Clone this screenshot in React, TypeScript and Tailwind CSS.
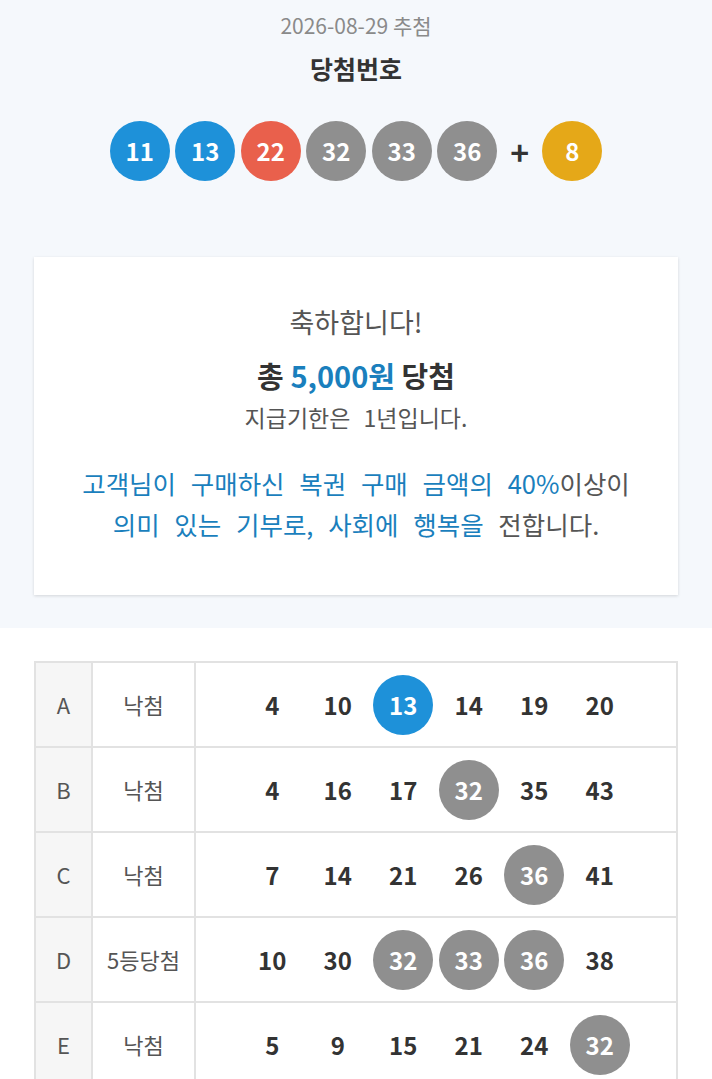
import React from "react";

const font = { fontFamily: '"Noto Sans CJK KR", "Noto Sans", sans-serif' };

const winning = [
  { n: 11, c: "bg-[#1e91d9]" },
  { n: 13, c: "bg-[#1e91d9]" },
  { n: 22, c: "bg-[#e9604c]" },
  { n: 32, c: "bg-[#8f8f8f]" },
  { n: 33, c: "bg-[#8f8f8f]" },
  { n: 36, c: "bg-[#8f8f8f]" },
];

const matchColor: Record<number, string> = {
  11: "bg-[#1e91d9]",
  13: "bg-[#1e91d9]",
  22: "bg-[#e9604c]",
  32: "bg-[#8f8f8f]",
  33: "bg-[#8f8f8f]",
  36: "bg-[#8f8f8f]",
};

const rows = [
  { key: "A", result: "낙첨", nums: [4, 10, 13, 14, 19, 20] },
  { key: "B", result: "낙첨", nums: [4, 16, 17, 32, 35, 43] },
  { key: "C", result: "낙첨", nums: [7, 14, 21, 26, 36, 41] },
  { key: "D", result: "5등당첨", nums: [10, 30, 32, 33, 36, 38] },
  { key: "E", result: "낙첨", nums: [5, 9, 15, 21, 24, 32] },
];

function Ball({ n, color }: { n: number; color: string }) {
  return (
    <div
      className={`flex h-[60px] w-[60px] items-center justify-center rounded-full text-[24px] font-bold text-white ${color}`}
    >
      {n}
    </div>
  );
}

export default function App() {
  return (
    <div className="min-h-[1079px] bg-white" style={font}>
      {/* Draw result */}
      <div className="bg-[#f5f8fc] px-[34px] pb-[33px] pt-[12px]">
        <p className="text-center text-[21px] leading-[26px] text-[#8a8a8a]">
          2026-08-29 추첨
        </p>
        <h1 className="mt-[15px] text-center text-[25px] font-bold leading-[30px] text-[#333]">
          당첨번호
        </h1>
        <div className="mt-[38px] flex items-center justify-center gap-[5.5px]">
          {winning.map((b) => (
            <Ball key={b.n} n={b.n} color={b.c} />
          ))}
          <span className="mx-[6px] w-[22px] text-center text-[32px] font-bold leading-none text-[#333]">
            +
          </span>
          <Ball n={8} color="bg-[#e5a818]" />
        </div>

        {/* Result card */}
        <div className="mt-[76px] bg-white pb-[51px] pt-[49px] text-center shadow-[0_1px_3px_rgba(0,0,0,0.14)]">
          <p className="text-[27px] leading-[32px] text-[#555]">축하합니다!</p>
          <p className="mt-[20px] text-[29px] font-bold leading-[34px] text-[#333]">
            총 <span className="text-[#1a7fbd]">5,000원</span> 당첨
          </p>
          <p className="mt-[11px] text-[23px] leading-[28px] text-[#555] [word-spacing:8px]">
            지급기한은 1년입니다.
          </p>
          <p className="mt-[31px] text-[25.5px] leading-[41px] text-[#1a7fbd] [word-spacing:9px]">
            고객님이 구매하신 복권 구매 금액의 40%<span className="text-[#555]">이상이</span>
            <br />
            의미 있는 기부로, 사회에 행복을 <span className="text-[#555]">전합니다.</span>
          </p>
        </div>
      </div>

      {/* My tickets */}
      <div className="px-[34px] pt-[33px]">
        <div className="border-l-2 border-r-2 border-t-2 border-[#e2e2e2]">
          {rows.map((r) => (
            <div key={r.key} className="flex h-[85px] border-b-2 border-[#e2e2e2]">
              <div className="flex w-[57px] items-center justify-center border-r-2 border-[#e2e2e2] bg-[#f6f6f6] text-[22px] text-[#555]">
                {r.key}
              </div>
              <div className="flex w-[103px] items-center justify-center border-r-2 border-[#e2e2e2] text-[22px] text-[#555]">
                {r.result}
              </div>
              <div className="flex flex-1 items-center justify-center gap-[5.5px]">
                {r.nums.map((n, i) =>
                  matchColor[n] ? (
                    <Ball key={i} n={n} color={matchColor[n]} />
                  ) : (
                    <div
                      key={i}
                      className="flex h-[60px] w-[60px] items-center justify-center text-[24px] font-bold text-[#333]"
                    >
                      {n}
                    </div>
                  )
                )}
              </div>
            </div>
          ))}
        </div>
      </div>
    </div>
  );
}
